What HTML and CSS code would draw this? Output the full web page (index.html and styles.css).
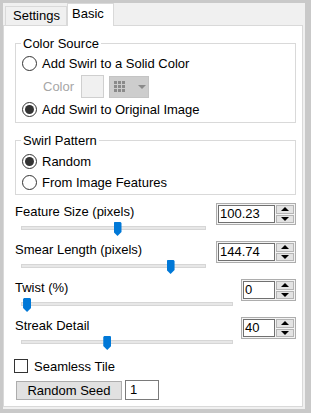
FILE: index.html
```html
<!DOCTYPE html>
<html lang="en">
<head>
  <meta charset="UTF-8" />
  <title>Swirl</title>
  <link rel="stylesheet" href="styles.css">
</head>
<body>
  <div class="window">
    <div class="tabs">
      <div class="tab">Settings</div>
      <div class="tab tab-active">Basic</div>
    </div>

    <div class="panel">
      <fieldset class="group group-color">
        <legend>Color Source</legend>
        <div class="radio"><span class="radio-mark"></span>Add Swirl to a Solid Color</div>
        <div class="color-row">
          <span class="muted">Color</span>
          <span class="swatch"></span>
          <span class="palette-btn">
            <span class="palette-grid">
              <i></i><i></i><i></i><i></i><i></i><i></i><i></i><i></i><i></i>
            </span>
            <span class="caret"></span>
          </span>
        </div>
        <div class="radio radio-gap"><span class="radio-mark checked"></span>Add Swirl to Original Image</div>
      </fieldset>

      <fieldset class="group group-pattern">
        <legend>Swirl Pattern</legend>
        <div class="radio"><span class="radio-mark checked"></span>Random</div>
        <div class="radio radio-gap"><span class="radio-mark"></span>From Image Features</div>
      </fieldset>

      <div class="slider-block">
        <div class="slider-label">Feature Size (pixels)</div>
        <div class="spin">
          <span class="spin-value">100.23</span>
          <span class="spin-btns"><span class="spin-up"></span><span class="spin-down"></span></span>
        </div>
        <div class="slider"><div class="track"><span class="thumb" style="left: 50%"></span></div></div>
      </div>

      <div class="slider-block">
        <div class="slider-label">Smear Length (pixels)</div>
        <div class="spin">
          <span class="spin-value">144.74</span>
          <span class="spin-btns"><span class="spin-up"></span><span class="spin-down"></span></span>
        </div>
        <div class="slider"><div class="track"><span class="thumb" style="left: 79%"></span></div></div>
      </div>

      <div class="slider-block slider-narrow">
        <div class="slider-label">Twist (%)</div>
        <div class="spin">
          <span class="spin-value">0</span>
          <span class="spin-btns"><span class="spin-up"></span><span class="spin-down"></span></span>
        </div>
        <div class="slider"><div class="track"><span class="thumb" style="left: 0.5%"></span></div></div>
      </div>

      <div class="slider-block slider-narrow">
        <div class="slider-label">Streak Detail</div>
        <div class="spin">
          <span class="spin-value">40</span>
          <span class="spin-btns"><span class="spin-up"></span><span class="spin-down"></span></span>
        </div>
        <div class="slider"><div class="track"><span class="thumb" style="left: 38.7%"></span></div></div>
      </div>

      <div class="check-row"><span class="checkbox"></span>Seamless Tile</div>

      <div class="seed-row">
        <button class="seed-btn">Random Seed</button>
        <span class="seed-input">1</span>
      </div>
    </div>
  </div>
</body>
</html>
```

FILE: styles.css
```css
* {
  box-sizing: border-box;
}

body {
  margin: 0;
  padding: 3px 6px 4px 3px;
  background: #c9c9c9;
  font-family: "Liberation Sans", Arial, sans-serif;
  font-size: 13px;
  color: #000;
}

.window {
  width: 302px;
  height: 406px;
  background: #f0f0f0;
}

/* tabs */
.tabs {
  display: flex;
  align-items: flex-end;
  height: 22px;
  padding-left: 2px;
}

.tab {
  height: 19px;
  line-height: 18px;
  padding: 0 6px 0 7px;
  border: 1px solid #d9d9d9;
  border-bottom: none;
  background: #f0f0f0;
}

.tab-active {
  position: relative;
  z-index: 1;
  height: 23px;
  line-height: 20px;
  padding: 0 9px 0 4px;
  margin-bottom: -1px;
  background: #fff;
}

/* panel */
.panel {
  height: 382px;
  margin-right: 2px;
  padding: 10px 6px 0 11px;
  border: 1px solid #d9d9d9;
  background: #fff;
}

.group {
  margin: 0;
  padding: 2px 5px 3px;
  border: 1px solid #d9d9d9;
}

.group legend {
  padding: 0 2px;
  line-height: 15px;
}

.group-pattern {
  margin-top: 10px;
  padding-top: 3px;
  padding-bottom: 2px;
}

.radio {
  display: flex;
  align-items: center;
  gap: 5px;
  height: 20px;
}

.radio-gap {
  margin-top: 1px;
}

.radio-mark {
  position: relative;
  width: 15px;
  height: 15px;
  margin-left: 1px;
  border: 1px solid #333;
  border-radius: 50%;
  background: #fff;
}

.radio-mark.checked::after {
  content: "";
  position: absolute;
  left: 2px;
  top: 2px;
  width: 9px;
  height: 9px;
  border-radius: 50%;
  background: #333;
}

.color-row {
  display: flex;
  align-items: center;
  height: 23px;
  margin-top: 2px;
  padding-left: 22px;
}

.muted {
  color: #a6a6a6;
}

.swatch {
  width: 23px;
  height: 23px;
  margin-left: 7px;
  border: 1px solid #cfcfcf;
  background: #f0f0f0;
}

.palette-btn {
  display: flex;
  align-items: center;
  width: 40px;
  height: 22px;
  margin-left: 5px;
  padding-left: 4px;
  background: #cdcdcd;
  border: 1px solid #c4c4c4;
}

.palette-grid {
  display: grid;
  grid-template-columns: repeat(3, 3px);
  gap: 1px;
}

.palette-grid i {
  width: 3px;
  height: 3px;
  background: #8a8a8a;
}

.caret {
  margin-left: 13px;
  border-left: 4px solid transparent;
  border-right: 4px solid transparent;
  border-top: 4px solid #8a8a8a;
}

/* sliders */
.slider-block {
  display: grid;
  grid-template-columns: 1fr 80px;
  grid-template-rows: 16px 16px;
  column-gap: 10px;
  margin-top: 6px;
}

.group-pattern + .slider-block {
  margin-top: 9px;
}

.slider-narrow {
  grid-template-columns: 1fr 55px;
  column-gap: 8px;
}

.slider-label {
  line-height: 16px;
}

.spin {
  grid-column: 2;
  grid-row: 1 / 3;
  display: flex;
  height: 22px;
  margin-top: -1px;
  padding: 1px;
  border: 1px solid #adadad;
  background: #f4f4f4;
}

.spin-value {
  flex: 1;
  padding-left: 1px;
  line-height: 16px;
  border: 1px solid #707070;
  background: #fff;
}

.spin-btns {
  display: flex;
  flex-direction: column;
  gap: 1px;
  width: 18px;
  margin-left: 1px;
}

.spin-up,
.spin-down {
  flex: 1;
  display: flex;
  align-items: center;
  justify-content: center;
  background: #e3e3e3;
  border: 1px solid #b4b4b4;
}

.spin-up::after,
.spin-down::after {
  content: "";
  border-left: 4px solid transparent;
  border-right: 4px solid transparent;
}

.spin-up::after {
  border-bottom: 4px solid #000;
}

.spin-down::after {
  border-top: 4px solid #000;
}

.slider {
  grid-column: 1;
  grid-row: 2;
  padding: 6px 0 0 6px;
}

.track {
  position: relative;
  height: 4px;
  background: #e7e7e7;
  border: 1px solid #d6d6d6;
}

.thumb {
  position: absolute;
  top: -5px;
  width: 8px;
  height: 14px;
  background: #0078d7;
  clip-path: polygon(0 1px, 1px 0, 7px 0, 8px 1px, 8px 10px, 4px 14px, 0 10px);
}

/* bottom */
.check-row {
  display: flex;
  align-items: center;
  gap: 6px;
  height: 16px;
  margin-top: 8px;
  margin-left: -1px;
}

.checkbox {
  width: 14px;
  height: 14px;
  border: 1px solid #333;
  background: #fff;
}

.seed-row {
  display: flex;
  gap: 3px;
  margin-top: 6px;
  margin-left: 1px;
}

.seed-btn {
  width: 106px;
  height: 19px;
  margin-top: 1px;
  padding: 0;
  font: inherit;
  color: #000;
  background: #e1e1e1;
  border: 1px solid #adadad;
}

.seed-input {
  width: 34px;
  height: 20px;
  padding-left: 4px;
  line-height: 18px;
  border: 1px solid #7a7a7a;
  background: #fff;
}
```
